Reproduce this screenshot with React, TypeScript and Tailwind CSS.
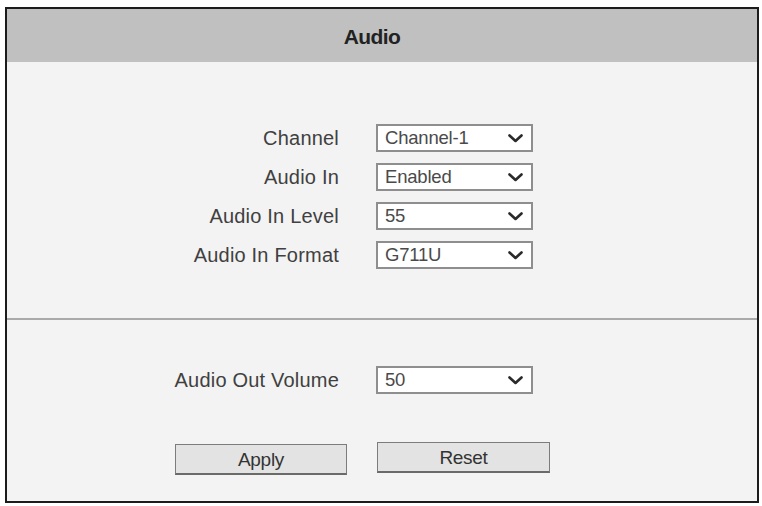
import React from "react";

type Field = { label: string; value: string };

const inputFields: Field[] = [
  { label: "Channel", value: "Channel-1" },
  { label: "Audio In", value: "Enabled" },
  { label: "Audio In Level", value: "55" },
  { label: "Audio In Format", value: "G711U" },
];

const Chevron = (): React.ReactElement => (
  <svg width="15" height="9" viewBox="0 0 15 9" className="shrink-0">
    <polyline
      points="1.5,1.5 7.5,7 13.5,1.5"
      fill="none"
      stroke="#2a2a2a"
      strokeWidth="2.6"
      strokeLinecap="round"
      strokeLinejoin="round"
    />
  </svg>
);

const SelectRow = ({ label, value }: Field): React.ReactElement => (
  <div className="flex items-center">
    <div className="w-[332px] text-right text-[20px] text-[#404040] leading-none tracking-[0.2px]">
      {label}
    </div>
    <div className="ml-[37px] w-[157px] h-[28px] flex items-center justify-between bg-white border-2 border-[#8e8e8e] pl-[7px] pr-[8px]">
      <span className="text-[18.5px] text-[#4a4a4a] leading-none tracking-[-0.2px]">
        {value}
      </span>
      <Chevron />
    </div>
  </div>
);

const App = (): React.ReactElement => {
  return (
    <div
      className="w-[762px] h-[506px] bg-white pt-[7px] pl-[5px]"
      style={{ fontFamily: '"Liberation Sans", Arial, sans-serif' }}
    >
      <div className="w-[754px] h-[496px] border-2 border-[#1c1c1c] bg-[#f3f3f3] flex flex-col">
        {/* title bar */}
        <div className="h-[53px] bg-[#c0c0c0] flex items-center justify-center pr-[20px] pt-[2px]">
          <span className="text-[21px] font-bold text-[#222] tracking-[-0.6px]">
            Audio
          </span>
        </div>

        {/* audio input settings */}
        <div className="flex flex-col gap-[11px] pt-[62px] h-[256px]">
          {inputFields.map((f) => (
            <SelectRow key={f.label} label={f.label} value={f.value} />
          ))}
        </div>

        <div className="h-[2px] bg-[#a9a9a9]" />

        {/* audio output */}
        <div className="pt-[46px]">
          <SelectRow label="Audio Out Volume" value="50" />
        </div>

        <div className="flex pt-[50px] pl-[168px] gap-[30px]">
          <button className="w-[172px] h-[31px] bg-[#e3e3e3] border border-[#7c7c7c] border-b-2 border-b-[#6a6a6a] text-[19px] text-[#333] leading-none tracking-[-0.3px]">
            Apply
          </button>
          <button className="w-[173px] h-[31px] bg-[#e3e3e3] border border-[#7c7c7c] border-b-2 border-b-[#6a6a6a] text-[19px] text-[#333] leading-none tracking-[-0.3px] -mt-[2px]">
            Reset
          </button>
        </div>
      </div>
    </div>
  );
};

export default App;
